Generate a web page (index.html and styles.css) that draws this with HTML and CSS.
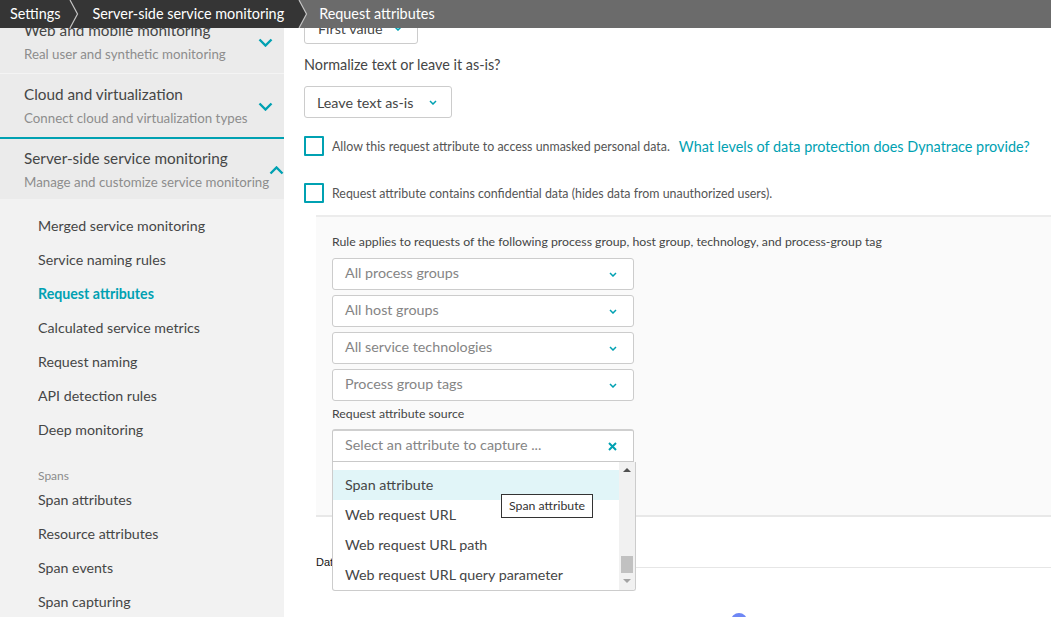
FILE: index.html
```html
<!DOCTYPE html>
<html lang="en">
<head>
<meta charset="utf-8">
<title>Request attributes</title>
<link rel="stylesheet" href="styles.css">
</head>
<body>
<header class="crumbs">
  <span class="crumb dark first">Settings</span>
  <svg class="sep dark" width="10" height="28" viewBox="0 0 10 28"><polyline points="1,0 8.5,14 1,28" fill="none" stroke="#c4c4c4" stroke-width="1.2"/></svg>
  <span class="crumb dark second">Server-side service monitoring</span>
  <svg class="sep" width="10" height="28" viewBox="0 0 10 28"><polygon points="0,0 1,0 8.5,14 1,28 0,28" fill="#353535"/><polyline points="1,0 8.5,14 1,28" fill="none" stroke="#c4c4c4" stroke-width="1.2"/></svg>
  <span class="crumb current">Request attributes</span>
</header>

<div class="page">
  <aside class="sidebar">
    <div class="group top">
      <div class="group-text">
        <div class="group-title">Web and mobile monitoring</div>
        <div class="group-sub">Real user and synthetic monitoring</div>
      </div>
      <svg class="chev" width="15" height="9" viewBox="0 0 15 9"><polyline points="1.5,1.5 7.5,7.5 13.5,1.5" fill="none" stroke="#00a1b2" stroke-width="2.4"/></svg>
    </div>
    <div class="group second">
      <div class="group-text">
        <div class="group-title">Cloud and virtualization</div>
        <div class="group-sub">Connect cloud and virtualization types</div>
      </div>
      <svg class="chev" width="15" height="9" viewBox="0 0 15 9"><polyline points="1.5,1.5 7.5,7.5 13.5,1.5" fill="none" stroke="#00a1b2" stroke-width="2.4"/></svg>
    </div>
    <div class="group open">
      <div class="group-text">
        <div class="group-title">Server-side service monitoring</div>
        <div class="group-sub">Manage and customize service monitoring</div>
      </div>
      <svg class="chev" width="15" height="9" viewBox="0 0 15 9"><polyline points="1.5,7.5 7.5,1.5 13.5,7.5" fill="none" stroke="#00a1b2" stroke-width="2.4"/></svg>
    </div>
    <nav class="nav">
      <a class="nav-item">Merged service monitoring</a>
      <a class="nav-item">Service naming rules</a>
      <a class="nav-item active">Request attributes</a>
      <a class="nav-item">Calculated service metrics</a>
      <a class="nav-item">Request naming</a>
      <a class="nav-item">API detection rules</a>
      <a class="nav-item">Deep monitoring</a>
      <div class="nav-label">Spans</div>
      <a class="nav-item">Span attributes</a>
      <a class="nav-item">Resource attributes</a>
      <a class="nav-item">Span events</a>
      <a class="nav-item">Span capturing</a>
    </nav>
  </aside>

  <main class="main">
    <div class="select short">
      <span class="value">First value</span>
      <svg class="chev-sm" width="8" height="5" viewBox="0 0 8 5"><polyline points="1,1 4,4 7,1" fill="none" stroke="#00a1b2" stroke-width="1.5"/></svg>
    </div>
    <p class="question">Normalize text or leave it as-is?</p>
    <div class="select mid">
      <span class="value">Leave text as-is</span>
      <svg class="chev-sm" width="8" height="5" viewBox="0 0 8 5"><polyline points="1,1 4,4 7,1" fill="none" stroke="#00a1b2" stroke-width="1.5"/></svg>
    </div>

    <div class="check-row r1">
      <span class="box"></span>
      <span class="check-text">Allow this request attribute to access unmasked personal data.</span>
      <a class="link">What levels of data protection does Dynatrace provide?</a>
    </div>
    <div class="check-row r2">
      <span class="box"></span>
      <span class="check-text">Request attribute contains confidential data (hides data from unauthorized users).</span>
    </div>

    <section class="rule">
      <p class="rule-intro">Rule applies to requests of the following process group, host group, technology, and process-group tag</p>
      <div class="select wide first-sel">
        <span class="placeholder">All process groups</span>
        <svg class="chev-sm" width="8" height="5" viewBox="0 0 8 5"><polyline points="1,1 4,4 7,1" fill="none" stroke="#00a1b2" stroke-width="1.5"/></svg>
      </div>
      <div class="select wide">
        <span class="placeholder">All host groups</span>
        <svg class="chev-sm" width="8" height="5" viewBox="0 0 8 5"><polyline points="1,1 4,4 7,1" fill="none" stroke="#00a1b2" stroke-width="1.5"/></svg>
      </div>
      <div class="select wide">
        <span class="placeholder">All service technologies</span>
        <svg class="chev-sm" width="8" height="5" viewBox="0 0 8 5"><polyline points="1,1 4,4 7,1" fill="none" stroke="#00a1b2" stroke-width="1.5"/></svg>
      </div>
      <div class="select wide">
        <span class="placeholder">Process group tags</span>
        <svg class="chev-sm" width="8" height="5" viewBox="0 0 8 5"><polyline points="1,1 4,4 7,1" fill="none" stroke="#00a1b2" stroke-width="1.5"/></svg>
      </div>

      <p class="field-label">Request attribute source</p>
      <div class="combo">
        <div class="combo-input">
          <span class="placeholder">Select an attribute to capture ...</span>
          <svg class="clear" width="9" height="9" viewBox="0 0 9 9"><path d="M1 1 L8 8 M8 1 L1 8" fill="none" stroke="#00a1b2" stroke-width="2"/></svg>
        </div>
        <div class="menu">
          <ul class="menu-list">
            <li class="menu-item hl">Span attribute</li>
            <li class="menu-item">Web request URL</li>
            <li class="menu-item">Web request URL path</li>
            <li class="menu-item">Web request URL query parameter</li>
          </ul>
          <div class="scrollbar">
            <span class="arrow up"></span>
            <span class="thumb"></span>
            <span class="arrow down"></span>
          </div>
        </div>
        <div class="tooltip">Span attribute</div>
      </div>
    </section>

    <div class="table-head">
      <span class="th">Data type</span>
      <span class="th-line"></span>
    </div>
    <div class="spinner"></div>
  </main>
</div>
</body>
</html>
```

FILE: styles.css
```css
* {
  box-sizing: border-box;
}

html, body {
  margin: 0;
  padding: 0;
  width: 1051px;
  height: 617px;
  overflow: hidden;
  background: #ffffff;
  font-family: Lato, "Open Sans", "Liberation Sans", sans-serif;
  color: #454646;
}

/* Breadcrumb bar */
.crumbs {
  height: 28px;
  display: flex;
  align-items: stretch;
  background: #6b6b6b;
}

.crumb {
  color: #ffffff;
  font-size: 14.4px;
  line-height: 28px;
  white-space: nowrap;
}

.crumb.dark {
  background: #353535;
}

.crumb.first {
  padding: 0 9px 0 10px;
}

.crumb.second {
  padding: 0 14px 0 13px;
}

.crumb.current {
  padding-left: 11px;
}

.sep {
  display: block;
  flex-shrink: 0;
}

.sep.dark {
  background: #353535;
}

/* Page (content scrolled under the bar) */
.page {
  display: flex;
  height: 589px;
}

/* Sidebar */
.sidebar {
  width: 284px;
  flex-shrink: 0;
  background: #f2f2f2;
  overflow: hidden;
}

.group {
  display: flex;
  align-items: center;
  justify-content: space-between;
  padding: 10px 11px 9px 24px;
  background: #ebebeb;
  border-bottom: 1px solid #f4f4f4;
}

.group.top {
  margin-top: -18px;
}

.group.second {
  border-bottom: none;
}

.group.open {
  border-top: 2px solid #00a1b2;
  padding-top: 9px;
  padding-bottom: 7px;
  border-bottom: none;
}

.group-title {
  font-size: 15.3px;
  line-height: 20px;
  color: #454646;
  white-space: nowrap;
}

.group-sub {
  margin-top: 4px;
  font-size: 13.3px;
  line-height: 20px;
  color: #8d8d8d;
  white-space: nowrap;
}

.chev {
  display: block;
  flex-shrink: 0;
}

.nav {
  display: flex;
  flex-direction: column;
  padding-top: 10px;
}

.nav-item {
  display: block;
  height: 34px;
  line-height: 34px;
  padding-left: 38px;
  font-size: 14.2px;
  color: #454646;
  white-space: nowrap;
}

.nav-item.active {
  color: #00a1b2;
  font-weight: 700;
}

.nav-label {
  margin-top: 22px;
  padding-left: 38px;
  font-size: 12px;
  line-height: 14px;
  color: #8c8c8c;
}

/* Main */
.main {
  flex: 1;
  display: flex;
  flex-direction: column;
  align-items: flex-start;
  padding: 0 0 0 20px;
  min-width: 0;
  overflow: hidden;
}

.select {
  display: flex;
  align-items: center;
  justify-content: space-between;
  height: 32px;
  border: 1px solid #cccccc;
  border-radius: 3px;
  background: #ffffff;
  font-size: 14.3px;
  flex-shrink: 0;
}

.select.short {
  width: 114px;
  margin-top: -16px;
  padding: 0 15px 0 13px;
}

.select.mid {
  width: 148px;
  padding: 0 14px 0 12px;
  margin-top: 10px;
}

.select.wide {
  width: 302px;
  padding: 0 16px 0 12px;
  margin-top: 5px;
}

.select.wide.first-sel {
  margin-top: 8px;
}

.value {
  color: #454646;
}

.placeholder {
  color: #858585;
  font-size: 14.3px;
  line-height: 20px;
  padding-bottom: 2px;
}

.chev-sm {
  display: block;
  flex-shrink: 0;
}

.question {
  margin: 10px 0 0;
  font-size: 14.4px;
  line-height: 22px;
  color: #454646;
}

.check-row {
  display: flex;
  align-items: center;
  height: 20px;
}

.check-row.r1 {
  margin-top: 18px;
}

.check-row.r2 {
  margin-top: 27px;
}

.box {
  width: 20px;
  height: 20px;
  border: 2px solid #00a1b2;
  border-radius: 1px;
  background: #ffffff;
  flex-shrink: 0;
}

.check-text {
  margin-left: 8px;
  font-size: 12.4px;
  color: #555555;
  white-space: nowrap;
}

.link {
  margin-left: 9px;
  font-size: 14.4px;
  color: #00a1b2;
  white-space: nowrap;
}

/* Rule panel */
.rule {
  align-self: stretch;
  margin: 12px 0 0 12px;
  padding: 17px 0 53px 16px;
  background: #fafafa;
  border-top: 2px solid #ececec;
  border-bottom: 2px solid #e8e8e8;
  display: flex;
  flex-direction: column;
  align-items: flex-start;
}

.rule-intro {
  margin: 0;
  font-size: 12.3px;
  line-height: 16px;
  color: #454646;
  white-space: nowrap;
}

.field-label {
  margin: 5px 0 0;
  font-size: 12.3px;
  line-height: 16px;
  color: #454646;
}

.combo {
  position: relative;
  width: 302px;
  margin-top: 7px;
  z-index: 5;
}

.combo-input {
  display: flex;
  align-items: center;
  justify-content: space-between;
  height: 33px;
  padding: 0 16px 0 12px;
  background: #ffffff;
  border: 1px solid #c9c9c9;
  border-top: 2px solid #cfcfcf;
  border-radius: 3px 3px 0 0;
}

.clear {
  display: block;
}

.menu {
  position: absolute;
  top: 100%;
  left: 0;
  width: 304px;
  height: 129px;
  display: flex;
  background: #ffffff;
  border: 1px solid #cccccc;
  border-top: none;
  border-radius: 0 0 3px 3px;
  overflow: hidden;
}

.menu-list {
  flex: 1;
  margin: 0;
  padding: 8px 0 0;
  list-style: none;
}

.menu-item {
  height: 30px;
  line-height: 29px;
  padding-left: 12px;
  font-size: 14.3px;
  color: #454646;
  white-space: nowrap;
}

.menu-item.hl {
  background: #e1f5f8;
}

.scrollbar {
  width: 16px;
  flex-shrink: 0;
  background: #f1f1f1;
  display: flex;
  flex-direction: column;
  align-items: center;
}

.arrow {
  width: 0;
  height: 0;
  border-left: 4px solid transparent;
  border-right: 4px solid transparent;
}

.arrow.up {
  margin-top: 6px;
  border-bottom: 4px solid #505050;
}

.thumb {
  width: 12px;
  height: 17px;
  margin-top: 84px;
  background: #c1c1c1;
}

.arrow.down {
  margin-top: 6px;
  border-top: 4px solid #a3a3a3;
}

.tooltip {
  position: absolute;
  left: 169px;
  top: 65px;
  height: 24px;
  padding: 0 7px;
  line-height: 22px;
  font-size: 12.3px;
  color: #333333;
  background: #ffffff;
  border: 1px solid #333333;
  white-space: nowrap;
}

/* Below panel */
.table-head {
  align-self: stretch;
  display: flex;
  align-items: flex-end;
  margin: 38px 0 0 12px;
  height: 14px;
}

.th {
  font-family: "Liberation Sans", Arial, sans-serif;
  font-size: 11px;
  line-height: 14px;
  color: #111111;
  white-space: nowrap;
}

.th-line {
  flex: 1;
  margin-left: 10px;
  margin-bottom: 1px;
  border-bottom: 1px solid #e6e6e6;
}

.spinner {
  width: 16px;
  height: 16px;
  margin: 44px 0 0 427px;
  border-radius: 50%;
  background: #6e87f5;
  flex-shrink: 0;
}
```
